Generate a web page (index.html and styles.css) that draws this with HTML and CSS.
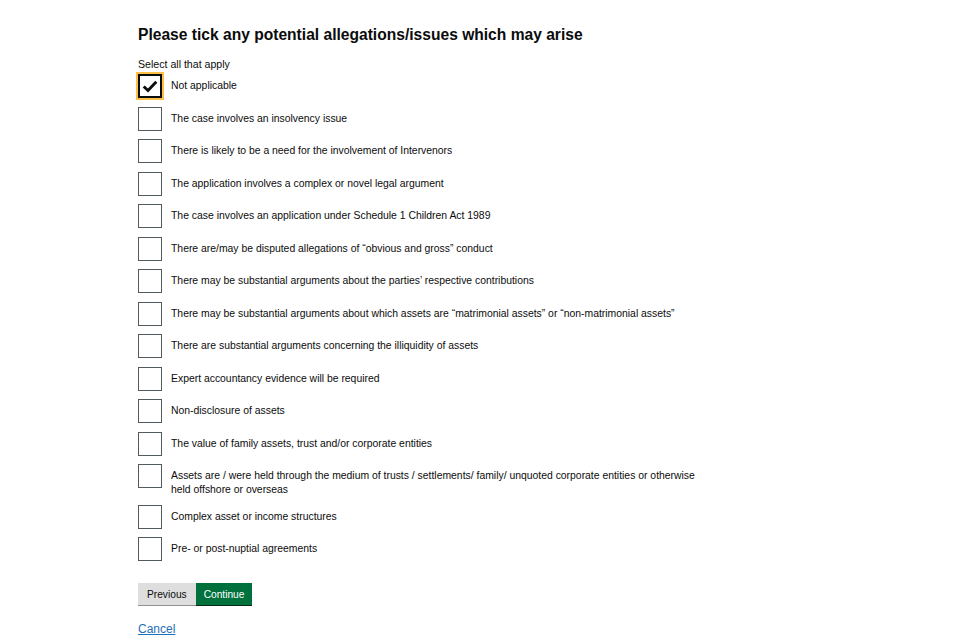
FILE: index.html
```html
<!DOCTYPE html>
<html lang="en">
<head>
<meta charset="utf-8">
<title>Allegations</title>
<link rel="stylesheet" href="styles.css">
</head>
<body>
<main class="page">
  <form class="form">
    <h1 class="heading">Please tick any potential allegations/issues which may arise</h1>
    <p class="hint">Select all that apply</p>
    <div class="options">
      <label class="option"><span class="box box--checked"><svg viewBox="0 0 20 20" class="tick"><path d="M3 10.5 L7.8 15 L17 5.2" fill="none" stroke="#0b0c0c" stroke-width="3.2"/></svg></span><span class="text">Not applicable</span></label>
      <label class="option"><span class="box"></span><span class="text">The case involves an insolvency issue</span></label>
      <label class="option"><span class="box"></span><span class="text">There is likely to be a need for the involvement of Intervenors</span></label>
      <label class="option"><span class="box"></span><span class="text">The application involves a complex or novel legal argument</span></label>
      <label class="option"><span class="box"></span><span class="text">The case involves an application under Schedule 1 Children Act 1989</span></label>
      <label class="option"><span class="box"></span><span class="text">There are/may be disputed allegations of “obvious and gross” conduct</span></label>
      <label class="option"><span class="box"></span><span class="text">There may be substantial arguments about the parties’ respective contributions</span></label>
      <label class="option"><span class="box"></span><span class="text">There may be substantial arguments about which assets are “matrimonial assets” or “non-matrimonial assets”</span></label>
      <label class="option"><span class="box"></span><span class="text">There are substantial arguments concerning the illiquidity of assets</span></label>
      <label class="option"><span class="box"></span><span class="text">Expert accountancy evidence will be required</span></label>
      <label class="option"><span class="box"></span><span class="text">Non-disclosure of assets</span></label>
      <label class="option"><span class="box"></span><span class="text">The value of family assets, trust and/or corporate entities</span></label>
      <label class="option"><span class="box"></span><span class="text">Assets are / were held through the medium of trusts / settlements/ family/ unquoted corporate entities or otherwise held offshore or overseas</span></label>
      <label class="option"><span class="box"></span><span class="text">Complex asset or income structures</span></label>
      <label class="option"><span class="box"></span><span class="text">Pre- or post-nuptial agreements</span></label>
    </div>
    <div class="buttons">
      <button type="button" class="btn btn--secondary">Previous</button><button type="button" class="btn btn--primary">Continue</button>
    </div>
    <a href="#" class="cancel">Cancel</a>
  </form>
</main>
</body>
</html>
```

FILE: styles.css
```css
* { box-sizing: border-box; }
html, body {
  margin: 0;
  padding: 0;
  background: #ffffff;
}
body {
  font-family: "Liberation Sans", Arial, sans-serif;
  color: #0b0c0c;
}
.page {
  padding: 25px 0 0 138px;
}
.form {
  width: 580px;
}
.heading {
  margin: 0;
  font-size: 15.6px;
  line-height: 20px;
  font-weight: 700;
}
.hint {
  margin: 12px 0 0 0;
  font-size: 10.6px;
  line-height: 14px;
}
.options {
  display: flex;
  flex-direction: column;
  gap: 8.5px;
  margin-top: 3px;
}
.option {
  display: flex;
  align-items: flex-start;
  gap: 9px;
  font-size: 10.4px;
  line-height: 13.5px;
}
.box {
  flex: 0 0 24px;
  width: 24px;
  height: 24px;
  border: 1.5px solid #505a5f;
  background: #fff;
  display: flex;
  align-items: center;
  justify-content: center;
}
.box--checked {
  border: 2px solid #0b0c0c;
  outline: 2px solid #ffbf47;
  outline-offset: 0;
  box-shadow: 0 0 0 1px #ffdd00;
}
.tick {
  width: 18px;
  height: 18px;
}
.text {
  padding-top: 5px;
  max-width: 530px;
}
.buttons {
  display: flex;
  margin-top: 22px;
}
.btn {
  font-family: "Liberation Sans", Arial, sans-serif;
  font-size: 10.2px;
  height: 22px;
  padding: 0 8px;
  border: 0;
  margin: 0;
  cursor: pointer;
}
.btn--secondary {
  background: #dedede;
  color: #0b0c0c;
  box-shadow: 0 1px 0 #929191;
  padding: 0 9px;
}
.btn--primary {
  background: #00703c;
  color: #ffffff;
  box-shadow: 0 1px 0 #002d18;
}
.cancel {
  display: inline-block;
  margin-top: 17px;
  font-size: 12px;
  color: #1d70b8;
  text-decoration: underline;
}
```
